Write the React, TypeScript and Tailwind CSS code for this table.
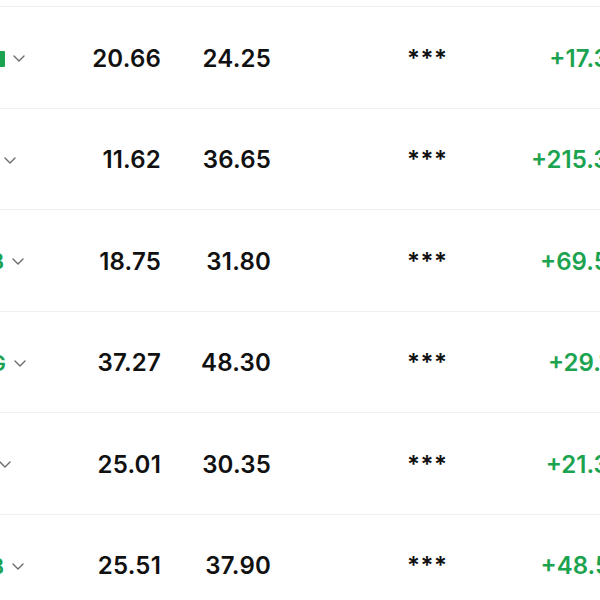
const rows = [
  { name: "SOXL", badge: true, nameClass: "mr-[15px]", open: "20.66", last: "24.25", change: "+17.35%" },
  { name: "TSLA", badge: false, nameClass: "mr-[24px]", open: "11.62", last: "36.65", change: "+215.36%" },
  { name: "ARKB", badge: false, nameClass: "mr-[16px]", open: "18.75", last: "31.80", change: "+69.55%" },
  { name: "GOOG", badge: false, nameClass: "mr-[14px]", open: "37.27", last: "48.30", change: "+29.15%" },
  { name: "MSFT", badge: false, nameClass: "mr-[29px]", open: "25.01", last: "30.35", change: "+21.35%" },
  { name: "ARKB", badge: false, nameClass: "mr-[16px]", open: "25.51", last: "37.90", change: "+48.57%" },
];

function Chevron() {
  return (
    <svg width="12" height="7" viewBox="0 0 12 7" fill="none" className="shrink-0">
      <path d="M1 1l5 5 5-5" stroke="#6b6b6b" strokeWidth="1.4" strokeLinecap="round" strokeLinejoin="round" />
    </svg>
  );
}

export default function App() {
  return (
    <div className="w-[600px] h-[600px] overflow-hidden bg-white font-['Inter',sans-serif]">
      <div className="h-[6px]" />
      <div className="w-[680px]">
        {rows.map((row, i) => (
          <div key={i} className="flex items-center h-[101.5px] pt-[3px] border-t border-[#f0f0f0]">
            {/* Name */}
            <div className="w-[40px] shrink-0 overflow-hidden flex justify-end">
              <div className={`flex items-center gap-2 shrink-0 ${row.nameClass}`}>
                <span className="text-[22px] font-semibold text-[#1ca350] whitespace-nowrap flex items-center gap-1">
                  {row.name}
                  {row.badge && (
                    <span className="inline-flex items-center justify-center w-[22px] h-[16px] bg-[#1ca350] text-white text-[10px] rounded-[1px]">
                      融
                    </span>
                  )}
                </span>
                <Chevron />
              </div>
            </div>

            {/* Prices */}
            <div className="w-[121px] shrink-0 text-right text-[24px] font-semibold text-[#111] tracking-[0.2px]">
              {row.open}
            </div>
            <div className="w-[110px] shrink-0 text-right text-[24px] font-semibold text-[#111] tracking-[0.2px]">
              {row.last}
            </div>

            {/* Hidden amount */}
            <div className="ml-[136px] w-[80px] shrink-0 text-[24px] font-semibold text-[#111] tracking-[0.5px]">***</div>

            {/* Change */}
            <div className="flex-1 text-right pr-[32px] text-[24px] font-semibold text-[#1ca350] whitespace-nowrap">
              {row.change}
            </div>
          </div>
        ))}
      </div>
    </div>
  );
}
